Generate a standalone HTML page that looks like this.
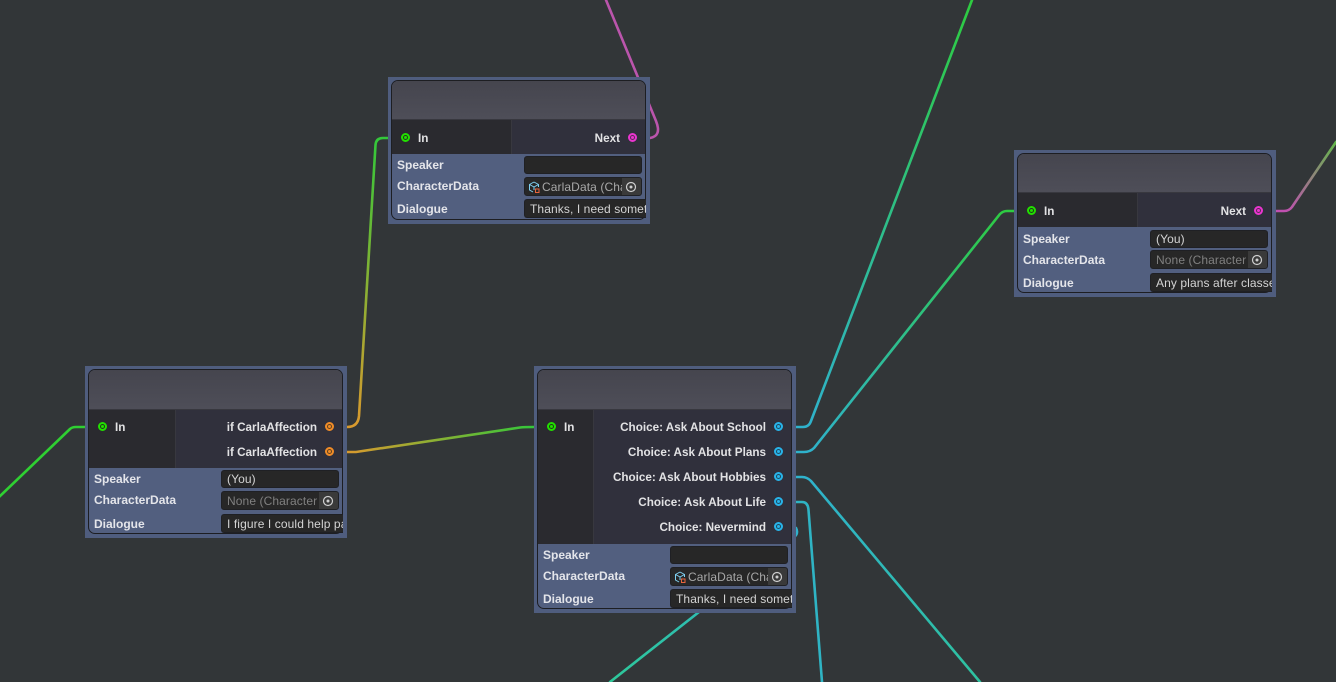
<!DOCTYPE html>
<html><head><meta charset="utf-8">
<style>
html,body{margin:0;padding:0;width:1336px;height:682px;overflow:hidden;background:#323638}
body{position:relative;font-family:"Liberation Sans",sans-serif}
svg.w{position:absolute;left:0;top:0}
.n{position:absolute;width:262px;background:#4f5d7e;box-sizing:border-box}
.i{position:absolute;left:3px;top:3px;right:4px;bottom:4px;background:#525f7f;border:1px solid #1d1e22;border-radius:7px;overflow:hidden;box-sizing:border-box}
.t{position:absolute;left:0;top:0;right:0;height:39px;background:linear-gradient(#45454e,#4e4e58);border-bottom:1px solid #38383f;box-sizing:border-box}
.pl{position:absolute;left:0;top:39px;background:#2a2a2f}
.pr{position:absolute;top:39px;right:0;background:#30303c;border-left:1px solid #38383f;box-sizing:border-box}
.a{position:absolute;white-space:nowrap;font-size:11.7px;line-height:14px;font-weight:bold;color:#e2e2e4}
.r{text-align:right}
.d{position:absolute;width:5px;height:5px;border-radius:50%;border:2px solid}
.d:after{content:"";position:absolute;left:1px;top:1px;width:3px;height:3px;border-radius:50%;background:currentColor}
.g{color:#22e000;border-color:#22e000;background:#1f3a1a}
.m{color:#ea35d0;border-color:#ea35d0;background:#5a2a55}
.b{color:#28b4ea;border-color:#28b4ea;background:#1d4a60}
.o{color:#f08c28;border-color:#f08c28;background:#60401f}
.l{position:absolute;left:9px;white-space:nowrap;font-size:12px;line-height:14px;font-weight:bold;color:#e4e5ea}
.f{position:absolute;left:136px;width:118px;background:#272727;border:1px solid #1f2024;border-radius:3px;box-sizing:border-box;overflow:hidden;white-space:nowrap;font-size:12px;color:#d4d4d4;letter-spacing:.1px;padding-left:5px}
.dim{color:#808080}
.pick{position:absolute;right:0;top:0;bottom:0;width:19px;background:#3a3a3a}
.pick svg{position:absolute;left:2px;top:2px}
</style></head><body>
<svg class="w" width="1336" height="682" viewBox="0 0 1336 682" fill="none" stroke-width="2.6" stroke-linecap="round">
<defs>
<linearGradient id="g1" gradientUnits="userSpaceOnUse" x1="375" y1="138" x2="358" y2="427"><stop offset="0" stop-color="#33c83a"/><stop offset="1" stop-color="#d99a2e"/></linearGradient>
<linearGradient id="g2" gradientUnits="userSpaceOnUse" x1="347" y1="452" x2="534" y2="427"><stop offset="0" stop-color="#d99a2e"/><stop offset="1" stop-color="#33c83a"/></linearGradient>
<linearGradient id="g3" gradientUnits="userSpaceOnUse" x1="805" y1="427" x2="972" y2="0"><stop offset="0" stop-color="#2fb2cc"/><stop offset="1" stop-color="#2ecc40"/></linearGradient>
<linearGradient id="g4" gradientUnits="userSpaceOnUse" x1="805" y1="452" x2="1014" y2="211"><stop offset="0" stop-color="#2fb2cc"/><stop offset="1" stop-color="#2ecc40"/></linearGradient>
<linearGradient id="g5" gradientUnits="userSpaceOnUse" x1="1284" y1="211" x2="1336" y2="142"><stop offset="0" stop-color="#c050b0"/><stop offset="1" stop-color="#63b84a"/></linearGradient>
<linearGradient id="g6" gradientUnits="userSpaceOnUse" x1="805" y1="477" x2="1100" y2="820"><stop offset="0" stop-color="#2fb2cc"/><stop offset="1" stop-color="#2ecc80"/></linearGradient>
<linearGradient id="g7" gradientUnits="userSpaceOnUse" x1="796" y1="527" x2="610" y2="682"><stop offset="0" stop-color="#2fb2cc"/><stop offset="1" stop-color="#2ec89a"/></linearGradient>
</defs>
<path d="M606 0L656 121Q662 136 650 138" stroke="#bb55ac"/>
<path d="M388 138H383Q376 138 375.500 145L359 416Q358 427 347 427" stroke="url(#g1)"/>
<path d="M347 452H356L520 427.500Q524 427 534 427" stroke="url(#g2)"/>
<path d="M-2 498L70 429Q72 427 76 427H85" stroke="#2fd032"/>
<path d="M796 427H803Q809 427 811 421L972 0" stroke="url(#g3)"/>
<path d="M796 452H804Q810 452 814 448L1000 214Q1003 211 1007 211H1014" stroke="url(#g4)"/>
<path d="M796 477H802Q807 477 811 481L980 682" stroke="url(#g6)"/>
<path d="M796 502H802Q808 502 808.500 510L822 682" stroke="#2fb4c4"/>
<path d="M796 528Q799 534 793 538L610 682" stroke="url(#g7)"/>
<path d="M1276 211H1284Q1289 211 1292 207L1336 142" stroke="url(#g5)"/>
</svg>

<!-- Node 1 -->
<div class="n" style="left:388px;top:77px;height:147px"><div class="i">
<div class="t"></div>
<div class="pl" style="width:119px;height:34px"></div><div class="pr" style="left:119px;height:34px"></div>
<div class="a" style="left:26px;top:51px">In</div>
<div class="a r" style="right:25px;top:51px">Next</div>
<div class="d g" style="left:8.5px;top:52px"></div><div class="d m" style="right:8.500px;top:52px"></div>
</div>
<div class="l" style="top:81px">Speaker</div><div class="f" style="top:79px;height:18px"></div>
<div class="l" style="top:102px">CharacterData</div><div class="f" style="top:100px;height:19px;line-height:18px;padding-left:17px;color:#a8a8a8">CarlaData (Cha
<svg style="position:absolute;left:3px;top:3px" width="13" height="13" viewBox="0 0 13 13" fill="none"><path d="M6 1L10.500 3.500V6M6 1L1.500 3.500V9L5 11M1.500 3.500L6 6V9M6 6L10.500 3.500" stroke="#7fd0f0" stroke-width="1"/><rect x="7.500" y="8" width="3.500" height="3.500" stroke="#e8643c" stroke-width="1"/></svg>
<div class="pick"><svg width="14" height="14" viewBox="0 0 14 14" fill="none"><circle cx="7" cy="7" r="4.500" stroke="#cfcfcf" stroke-width="1.200"/><circle cx="7" cy="7" r="1.500" fill="#cfcfcf"/></svg></div></div>
<div class="l" style="top:125px">Dialogue</div><div class="f" style="top:122px;height:19px;line-height:18px;width:122px;border-radius:3px 0 0 3px;border-right:0">Thanks, I need something</div>
</div>

<!-- Node 4 -->
<div class="n" style="left:1014px;top:150px;height:147px"><div class="i">
<div class="t"></div>
<div class="pl" style="width:119px;height:34px"></div><div class="pr" style="left:119px;height:34px"></div>
<div class="a" style="left:26px;top:51px">In</div>
<div class="a r" style="right:25px;top:51px">Next</div>
<div class="d g" style="left:8.5px;top:52px"></div><div class="d m" style="right:8.500px;top:52px"></div>
</div>
<div class="l" style="top:82px">Speaker</div><div class="f" style="top:80px;height:18px;line-height:17px">(You)</div>
<div class="l" style="top:103px">CharacterData</div><div class="f dim" style="top:100px;height:19px;line-height:18px">None (Character
<div class="pick"><svg width="14" height="14" viewBox="0 0 14 14" fill="none"><circle cx="7" cy="7" r="4.500" stroke="#cfcfcf" stroke-width="1.200"/><circle cx="7" cy="7" r="1.500" fill="#cfcfcf"/></svg></div></div>
<div class="l" style="top:126px">Dialogue</div><div class="f" style="top:123px;height:19px;line-height:18px;width:122px;border-radius:3px 0 0 3px;border-right:0">Any plans after classes</div>
</div>

<!-- Left node -->
<div class="n" style="left:85px;top:366px;height:172px"><div class="i">
<div class="t" style="height:40px"></div>
<div class="pl" style="width:86px;height:58px;top:40px"></div><div class="pr" style="left:86px;height:58px;top:40px"></div>
<div class="a" style="left:26px;top:51px">In</div>
<div class="a r" style="right:25px;top:51px">if CarlaAffection</div>
<div class="a r" style="right:25px;top:76px">if CarlaAffection</div>
<div class="d g" style="left:8.5px;top:52px"></div><div class="d o" style="right:8.500px;top:52px"></div><div class="d o" style="right:8.500px;top:77px"></div>
</div>
<div class="l" style="top:106px">Speaker</div><div class="f" style="top:104px;height:18px;line-height:17px">(You)</div>
<div class="l" style="top:127px">CharacterData</div><div class="f dim" style="top:125px;height:19px;line-height:18px">None (Character
<div class="pick"><svg width="14" height="14" viewBox="0 0 14 14" fill="none"><circle cx="7" cy="7" r="4.500" stroke="#cfcfcf" stroke-width="1.200"/><circle cx="7" cy="7" r="1.500" fill="#cfcfcf"/></svg></div></div>
<div class="l" style="top:151px">Dialogue</div><div class="f" style="top:148px;height:19px;line-height:18px;width:122px;border-radius:3px 0 0 3px;border-right:0">I figure I could help pass</div>
</div>

<!-- Mid node -->
<div class="n" style="left:534px;top:366px;height:247px"><div class="i">
<div class="t" style="height:40px"></div>
<div class="pl" style="width:55px;height:134px;top:40px"></div><div class="pr" style="left:55px;height:134px;top:40px"></div>
<div class="a" style="left:26px;top:51px">In</div>
<div class="a r" style="right:25px;top:51px">Choice: Ask About School</div>
<div class="a r" style="right:25px;top:76px">Choice: Ask About Plans</div>
<div class="a r" style="right:25px;top:101px">Choice: Ask About Hobbies</div>
<div class="a r" style="right:25px;top:126px">Choice: Ask About Life</div>
<div class="a r" style="right:25px;top:151px">Choice: Nevermind</div>
<div class="d g" style="left:8.5px;top:52px"></div>
<div class="d b" style="right:8.500px;top:52px"></div><div class="d b" style="right:8.500px;top:77px"></div><div class="d b" style="right:8.500px;top:102px"></div><div class="d b" style="right:8.500px;top:127px"></div><div class="d b" style="right:8.500px;top:152px"></div>
</div>
<div class="l" style="top:182px">Speaker</div><div class="f" style="top:180px;height:18px"></div>
<div class="l" style="top:203px">CharacterData</div><div class="f" style="top:201px;height:19px;line-height:18px;padding-left:17px;color:#a8a8a8">CarlaData (Cha
<svg style="position:absolute;left:3px;top:3px" width="13" height="13" viewBox="0 0 13 13" fill="none"><path d="M6 1L10.500 3.500V6M6 1L1.500 3.500V9L5 11M1.500 3.500L6 6V9M6 6L10.500 3.500" stroke="#7fd0f0" stroke-width="1"/><rect x="7.500" y="8" width="3.500" height="3.500" stroke="#e8643c" stroke-width="1"/></svg>
<div class="pick"><svg width="14" height="14" viewBox="0 0 14 14" fill="none"><circle cx="7" cy="7" r="4.500" stroke="#cfcfcf" stroke-width="1.200"/><circle cx="7" cy="7" r="1.500" fill="#cfcfcf"/></svg></div></div>
<div class="l" style="top:226px">Dialogue</div><div class="f" style="top:223px;height:19px;line-height:18px;width:122px;border-radius:3px 0 0 3px;border-right:0">Thanks, I need something</div>
</div>
</body></html>
